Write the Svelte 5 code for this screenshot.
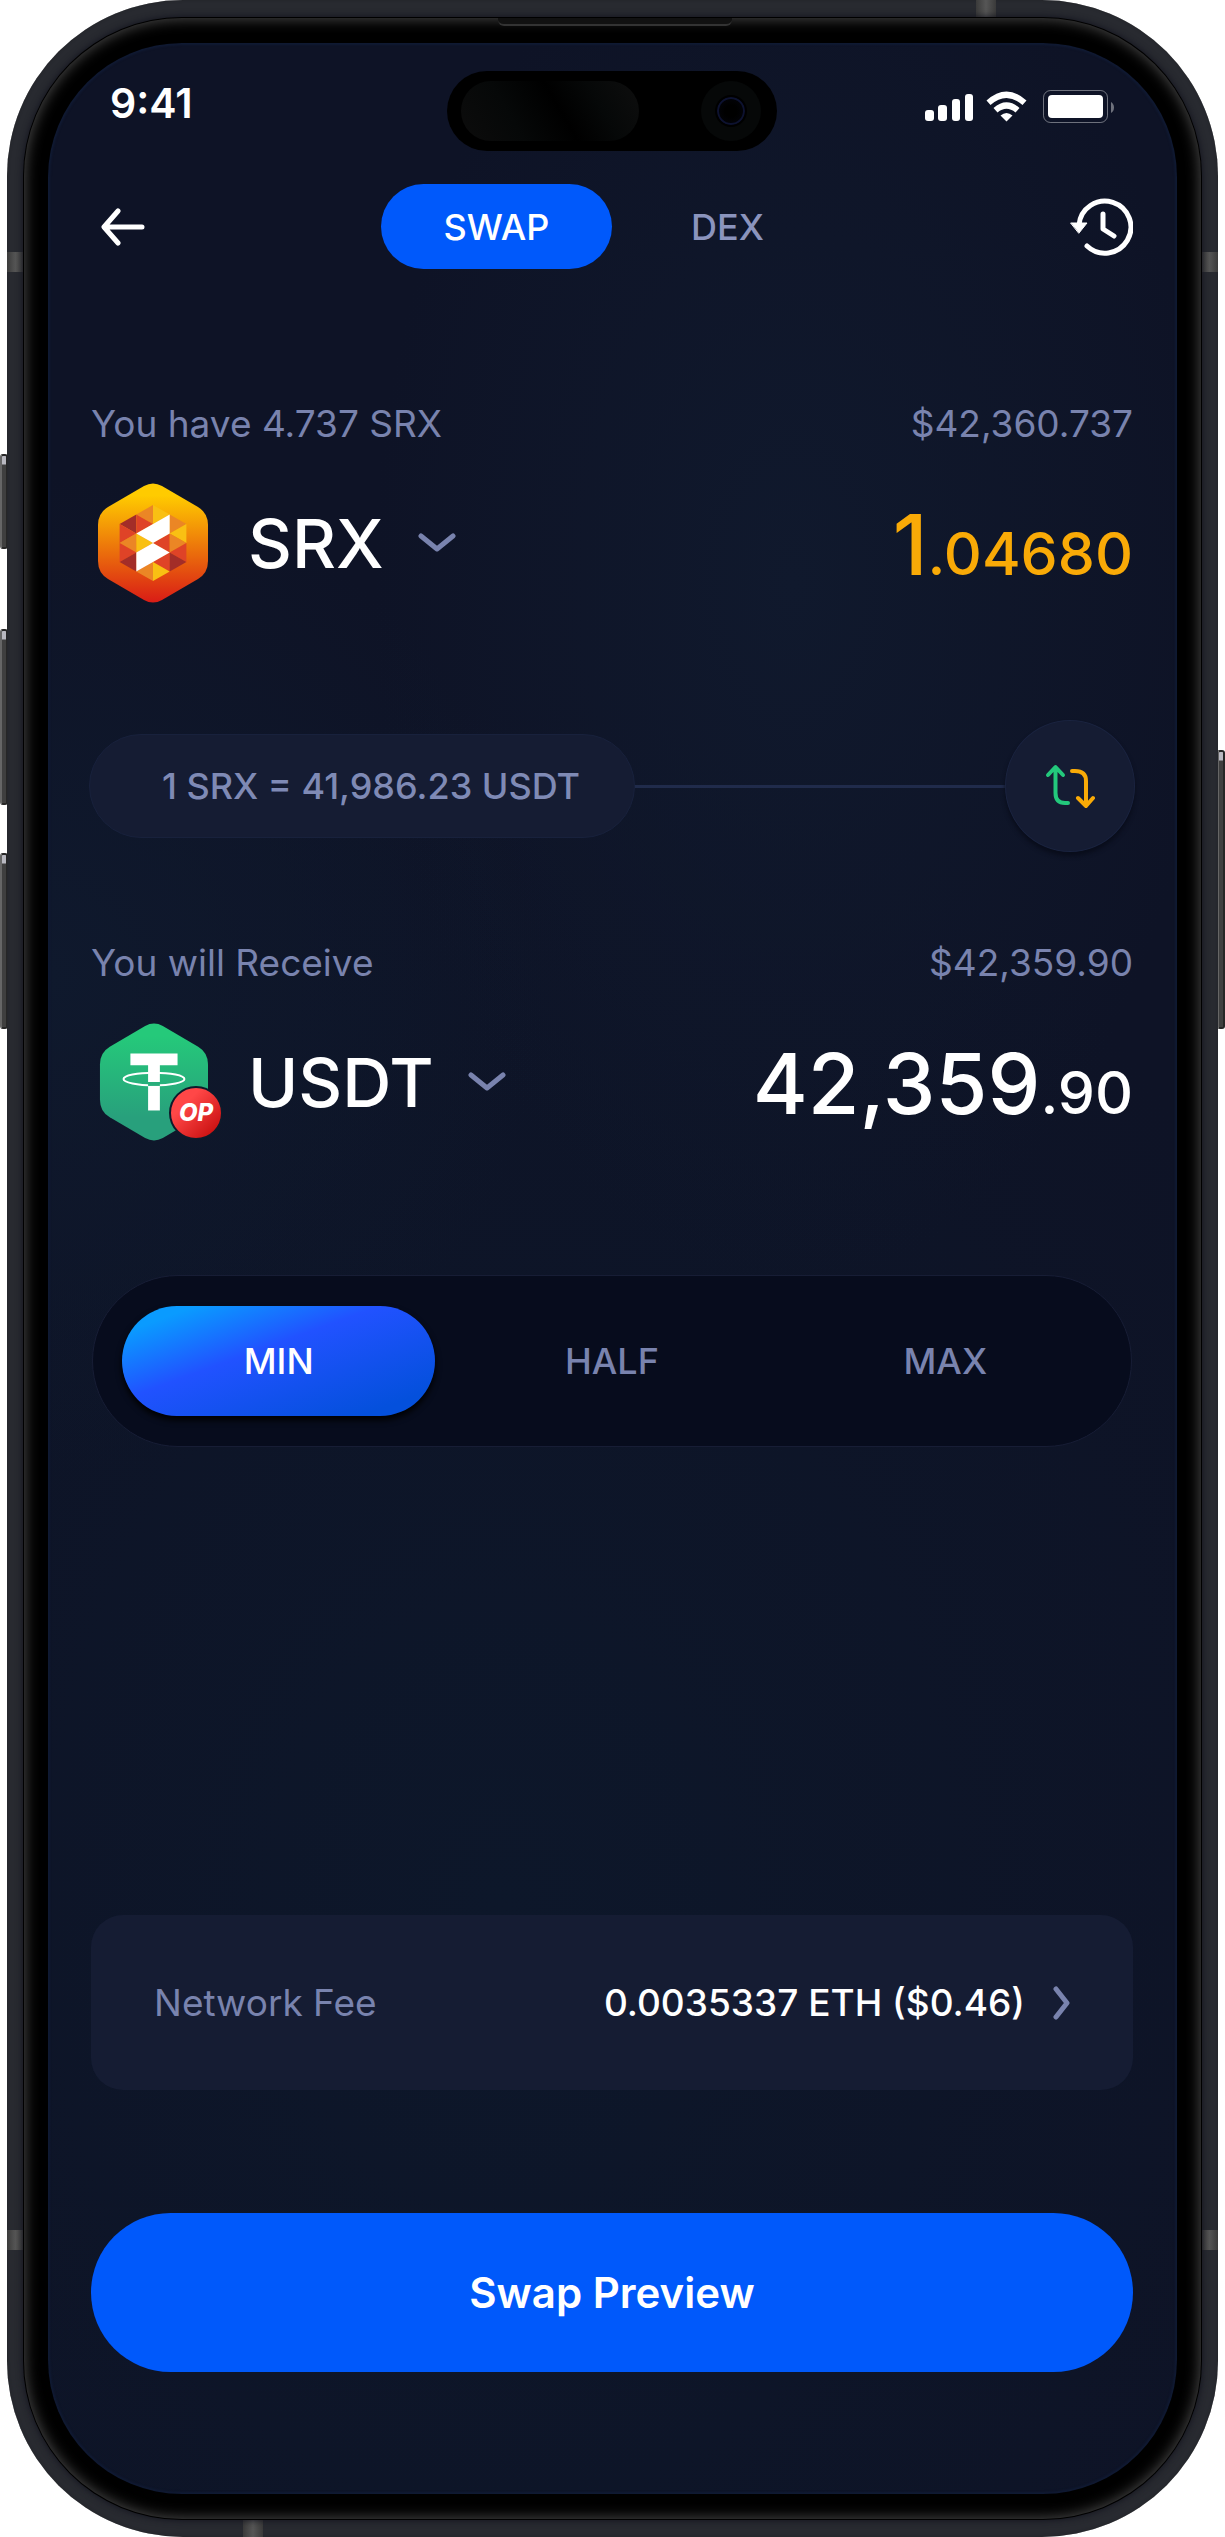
<script>
  let mode = $state("SWAP");
  let share = $state("MIN");

  const modes = ["SWAP", "DEX"];
  const shares = ["MIN", "HALF", "MAX"];

  const red = "#df4327";
  const dark = "#a32d28";
  const orange = "#eb8625";
  const yellow = "#f9c013";

  // facets of the SRX logo, in grid steps from its centre
  const facets = [
    [dark, [-2, -2], [-1, -3], [-1, -1]],
    [red, [-2, -2], [-2, 0], [-1, -1]],
    [orange, [-2, 0], [-1, -1], [-1, 1]],
    [red, [-2, 0], [-2, 2], [-1, 1]],
    [dark, [-2, 2], [-1, 1], [-1, 3]],
    [orange, [-1, -3], [0, -4], [0, -2]],
    [red, [-1, -3], [-1, -1], [0, -2]],
    [yellow, [-1, -1], [-1, 1], [0, 0]],
    [orange, [-1, 3], [0, 2], [0, 4]],
    [yellow, [0, -4], [1, -3], [0, -2]],
    [red, [0, 0], [1, -1], [1, 1]],
    [red, [0, 2], [1, 1], [1, 3]],
    [yellow, [0, 2], [1, 3], [0, 4]],
    [orange, [1, -3], [2, -2], [1, -1]],
    [yellow, [1, -1], [2, -2], [2, 0]],
    [orange, [1, -1], [2, 0], [1, 1]],
    [red, [1, 1], [2, 0], [2, 2]],
    [dark, [1, 1], [2, 2], [1, 3]],
    ["#fff", [-1, -1], [1, -3], [1, -1], [0, 0]],
    ["#fff", [-1, 1], [0, 0], [1, 1], [-1, 3]]
  ];

  function toPoints(list) {
    return list.map(([x, y]) => `${55 + x * 16.7},${60 + y * 9.5}`).join(" ");
  }

  const hexagon =
    "M46 3Q55-2 64 3L100 24Q110 30 110 42V78Q110 90 100 96L64 117Q55 122 46 117L10 96Q0 90 0 78V42Q0 30 10 24Z";
</script>

{#snippet chevron()}
  <svg class="chevron" width="38" height="20" viewBox="0 0 38 20" aria-hidden="true">
    <path d="M3 3L19 16L35 3" />
  </svg>
{/snippet}

<div class="device">
  <span class="key left action"></span>
  <span class="key left up"></span>
  <span class="key left down"></span>
  <span class="key right"></span>

  <div class="frame">
    <span class="band top"></span>
    <span class="band bottom"></span>
    <span class="band west high"></span>
    <span class="band west low"></span>
    <span class="band east high"></span>
    <span class="band east low"></span>

    <div class="bezel">
      <span class="speaker"></span>

      <main class="screen">
        <div class="status">
          <time>9:41</time>
          <div class="island">
            <span class="sensor"></span>
            <span class="camera"><span class="lens"></span></span>
          </div>
          <div class="signals">
            <svg width="190" height="34" viewBox="0 0 190 34" aria-hidden="true">
              <g fill="#fff">
                <rect x="0" y="20" width="9" height="11" rx="3" />
                <rect x="13" y="15" width="9" height="16" rx="3" />
                <rect x="27" y="9" width="8" height="22" rx="3" />
                <rect x="40" y="4" width="8" height="27" rx="3" />
                <path d="M61.5 10.5Q81.500-7.500 101.500 10.500L97.500 15Q81.500 1 65.500 15Z" />
                <path d="M68.500 18Q81.500 6.500 94.500 18L90.500 22.500Q81.500 15 72.500 22.500Z" />
                <path d="M75.500 25.500Q81.500 20.500 87.500 25.500L81.500 31.500Z" />
                <rect x="123" y="5" width="55" height="23" rx="4" />
              </g>
              <rect x="118.500" y="0.500" width="64" height="32" rx="7" fill="none" stroke="#fff" stroke-opacity=".4" />
              <path d="M186 12Q189 14 189 17.500T186 23Z" fill="#fff" fill-opacity=".4" />
            </svg>
          </div>
        </div>

        <header>
          <button class="icon back" aria-label="Back">
            <svg width="44" height="38" viewBox="0 0 44 38">
              <path d="M41 19H4M17 3L3 19L17 35" />
            </svg>
          </button>
          <nav>
            {#each modes as name}
              <button class:active={mode === name} onclick={() => (mode = name)}>{name}</button>
            {/each}
          </nav>
          <button class="icon" aria-label="History">
            <svg width="64" height="58" viewBox="0 0 64 58">
              <path d="M10 27A26 26 0 1 1 18 48M34 16V31L45 38" />
              <path class="tip" d="M2 25H18L10 35Z" />
            </svg>
          </button>
        </header>

        <section class="asset from">
          <div class="caption">
            <span>You have 4.737 SRX</span>
            <span>$42,360.737</span>
          </div>
          <div class="row">
            <button class="token">
              <svg class="coin" width="110" height="120" viewBox="0 0 110 120" aria-hidden="true">
                <defs>
                  <linearGradient id="srx" x1="0" y1="0" x2="0" y2="1">
                    <stop offset=".1" stop-color="#ffcb00" />
                    <stop offset="1" stop-color="#d91c16" />
                  </linearGradient>
                </defs>
                <path d={hexagon} fill="url(#srx)" />
                {#each facets as [fill, ...points]}
                  <polygon {fill} points={toPoints(points)} />
                {/each}
              </svg>
              <span>SRX</span>
              {@render chevron()}
            </button>
            <p class="amount gold">1<small>.04680</small></p>
          </div>
        </section>

        <div class="rate">
          <span class="price">1 SRX = 41,986.23 USDT</span>
          <span class="line"></span>
          <button class="flip" aria-label="Switch tokens">
            <svg width="50" height="46" viewBox="0 0 50 46">
              <path stroke="#23c87c" d="M3 12L10.500 4L18 12M10.500 5V30Q10.500 40 20 40H23" />
              <path stroke="#f9aa07" d="M27 8H30Q41 8 41 18V43M33 35L41 43L48 35" />
            </svg>
          </button>
        </div>

        <section class="asset to">
          <div class="caption">
            <span>You will Receive</span>
            <span>$42,359.90</span>
          </div>
          <div class="row">
            <button class="token">
              <span class="stack">
                <svg class="coin" width="110" height="120" viewBox="-2 0 112 120" aria-hidden="true">
                  <defs>
                    <linearGradient id="usdt" x1="0" y1="0" x2="0" y2="1">
                      <stop offset=".1" stop-color="#25c97a" />
                      <stop offset=".8" stop-color="#28a07c" />
                    </linearGradient>
                  </defs>
                  <path d={hexagon} fill="url(#usdt)" />
                  <ellipse cx="55" cy="57" rx="31" ry="6.500" fill="none" stroke="#fff" stroke-width="2" />
                  <path d="M49 60H61V66H49Z" fill="#28ae7b" />
                  <path d="M31 31H79V43H61V60H49V43H31Z" fill="#fff" />
                  <path d="M49 64H61V89H49Z" fill="#fff" />
                </svg>
                <span class="badge">OP</span>
              </span>
              <span>USDT</span>
              {@render chevron()}
            </button>
            <p class="amount">42,359<small>.90</small></p>
          </div>
        </section>

        <div class="shares">
          {#each shares as name}
            <button class:active={share === name} onclick={() => (share = name)}>{name}</button>
          {/each}
        </div>

        <button class="fee">
          <span class="label">Network Fee</span>
          <span>0.0035337 ETH ($0.46)</span>
          <svg width="18" height="34" viewBox="0 0 18 34" aria-hidden="true">
            <path d="M3 3L14 17L3 31" />
          </svg>
        </button>

        <button class="preview">Swap Preview</button>
      </main>
    </div>
  </div>
</div>

<style>
  :global(body) {
    margin: 0;
    background: #fff;
  }

  .device {
    position: relative;
    padding: 0 7px;
    font-family: Inter, "Liberation Sans", sans-serif;
    color: #fff;
  }

  .device * {
    box-sizing: border-box;
  }

  button {
    padding: 0;
    border: none;
    background: none;
    color: inherit;
    font: inherit;
    cursor: pointer;
  }

  svg {
    display: block;
    flex: none;
  }

  /* phone body */
  .key {
    position: absolute;
    width: 8px;
    height: 176px;
    border: 2px solid #262626;
    border-left-color: #666;
    border-radius: 3px;
    background: linear-gradient(#b8b8c0 8px, #3f3f3f 9px);
  }
  .left { left: 0; }
  .action { top: 454px; height: 95px; }
  .up { top: 629px; }
  .down { top: 853px; }
  .right { right: 0; top: 750px; height: 279px; }

  .frame {
    position: relative;
    padding: 18px 17px;
    border-radius: 176px;
    background: #282a30;
    box-shadow: inset 0 0 3px #222326;
  }

  .band {
    position: absolute;
    width: 20px;
    height: 18px;
    background: linear-gradient(90deg, #3a3a3a, #565656, #3a3a3a);
  }
  .band.top { top: 0; right: 222px; }
  .band.bottom { bottom: 0; left: 236px; }
  .west, .east { width: 17px; height: 20px; }
  .west { left: 0; }
  .east { right: 0; }
  .high { top: 252px; }
  .low { bottom: 287px; }

  .bezel {
    position: relative;
    padding: 25px 24px;
    border-radius: 158px;
    background: #000;
    box-shadow: 0 0 0 1px #000, 0 0 7px 1px #10111c, inset 0 0 14px 1px #4a4a4a;
  }

  .speaker {
    position: absolute;
    top: 0;
    left: 50%;
    width: 234px;
    height: 8px;
    margin-left: -115px;
    border-bottom: 2px solid #333;
    border-radius: 0 0 6px 6px;
    background: #111;
  }

  .screen {
    display: flex;
    flex-direction: column;
    padding: 28px 44px 122px 43px;
    border-radius: 134px;
    background:
      radial-gradient(420px 700px at 66% 22%, #10192d, transparent),
      radial-gradient(500px 500px at 0% 38%, #0f192d, transparent),
      radial-gradient(900px 1200px at 40% 76%, #0d172a, transparent),
      #0e1326;
    box-shadow: inset 0 0 2px 2px #101a33;
  }

  /* status bar */
  .status {
    display: grid;
    grid-template-columns: 1fr 330px 1fr;
    align-items: start;
  }

  time {
    padding-left: 19px;
    font-size: 41px;
    font-weight: 600;
    line-height: 64px;
  }

  .island {
    display: flex;
    align-items: center;
    justify-content: space-between;
    height: 80px;
    padding: 0 16px 0 14px;
    border-radius: 40px;
    background: #000;
  }

  .sensor {
    width: 178px;
    height: 60px;
    border-radius: 30px;
    background: linear-gradient(60deg, #0c0c0c, #060808 30%, #000 55%, #060808 75%, #0e0e0e);
  }

  .camera {
    display: grid;
    place-items: center;
    width: 60px;
    height: 60px;
    border-radius: 50%;
    background: #060808;
  }

  .lens {
    width: 32px;
    height: 32px;
    border: 2px solid #000;
    border-radius: 50%;
    background: radial-gradient(circle, #000 30%, #05060f);
    box-shadow: inset 0 0 0 2px #0d1230;
  }

  .signals {
    display: flex;
    align-items: center;
    justify-content: flex-end;
    height: 72px;
    padding-right: 18px;
  }

  /* header */
  header {
    display: flex;
    align-items: center;
    justify-content: space-between;
    margin-top: 33px;
  }

  .back {
    width: 64px;
    padding-left: 10px;
  }

  .icon path {
    fill: none;
    stroke: #fff;
    stroke-width: 5;
    stroke-linecap: round;
    stroke-linejoin: round;
  }
  .icon .tip {
    fill: #fff;
    stroke-width: 1;
  }

  nav {
    display: flex;
  }

  nav button {
    width: 231px;
    height: 85px;
    border-radius: 43px;
    color: #8b94bd;
    font-size: 36px;
    font-weight: 500;
  }
  nav .active {
    background: #0059fb;
    color: #fff;
  }

  /* assets */
  .from { margin-top: 133px; }
  .to { margin-top: 89px; }

  .caption,
  .row {
    display: flex;
    justify-content: space-between;
  }

  .caption {
    margin-bottom: 37px;
    color: #7983ae;
    font-size: 37px;
    line-height: 44px;
  }

  .row {
    padding: 0 0 0 7px;
  }

  .token {
    display: flex;
    align-items: center;
    gap: 40px;
    height: 120px;
    font-size: 68px;
    font-weight: 500;
    line-height: 120px;
  }

  .stack {
    position: relative;
  }

  .badge {
    position: absolute;
    right: -15px;
    bottom: 2px;
    width: 54px;
    border: 2px solid #0e1a2b;
    border-radius: 50%;
    background: linear-gradient(135deg, #ff4747 30%, #c91010 90%);
    font-size: 24px;
    font-style: italic;
    font-weight: 800;
    line-height: 50px;
    text-align: center;
  }

  .chevron {
    margin-left: -6px;
  }

  .chevron path,
  .fee path {
    fill: none;
    stroke: #7983ae;
    stroke-width: 5;
    stroke-linecap: round;
    stroke-linejoin: round;
  }

  .amount {
    margin: 0;
    font-size: 84px;
    font-weight: 500;
    line-height: 124px;
    height: 120px;
  }
  .amount small {
    font-size: 59px;
    line-height: 1;
  }
  .gold {
    color: #f9aa07;
  }

  /* rate */
  .rate {
    display: flex;
    align-items: center;
    margin: 117px -2px 0 -2px;
  }

  .price {
    width: 546px;
    padding-left: 18px;
    border: 1px solid #18213c;
    border-radius: 52px;
    background: #151c33;
    color: #7f8ab5;
    font-size: 36px;
    font-weight: 500;
    line-height: 102px;
    text-align: center;
  }

  .line {
    flex: 1;
    height: 3px;
    background: #202b4b;
  }

  .flip {
    display: grid;
    place-items: center;
    width: 130px;
    height: 132px;
    border: 1px solid #1a233f;
    border-radius: 50%;
    background: #151c33;
    box-shadow: 0 4px 4px #090d1b;
  }
  .flip path {
    fill: none;
    stroke-width: 4;
    stroke-linecap: round;
    stroke-linejoin: round;
  }

  /* share of balance */
  .shares {
    display: flex;
    gap: 20px;
    margin: 133px 1px 0;
    padding: 30px 29px;
    border: 1px solid #171d35;
    border-radius: 86px;
    background: #070c1d;
  }

  .shares button {
    flex: 1;
    height: 110px;
    border-radius: 55px;
    color: #7983ae;
    font-size: 36px;
    font-weight: 500;
  }
  .shares .active {
    background: linear-gradient(160deg, #0a9bff 12%, #2152ff 42%, #0450dc 88%);
    box-shadow: 0 4px 6px #000;
    color: #fff;
  }

  /* fee and submit */
  .fee {
    display: flex;
    align-items: center;
    margin-top: 468px;
    padding: 0 62px 0 63px;
    border-radius: 32px;
    background: #151c33;
    font-size: 37px;
    font-weight: 500;
    line-height: 175px;
  }
  .fee .label {
    margin-right: auto;
    color: #7983ae;
    font-weight: 400;
  }
  .fee svg {
    margin-left: 28px;
  }

  .preview {
    margin-top: 123px;
    border-radius: 80px;
    background: #0059fb;
    font-size: 42px;
    font-weight: 600;
    line-height: 159px;
  }
</style>
